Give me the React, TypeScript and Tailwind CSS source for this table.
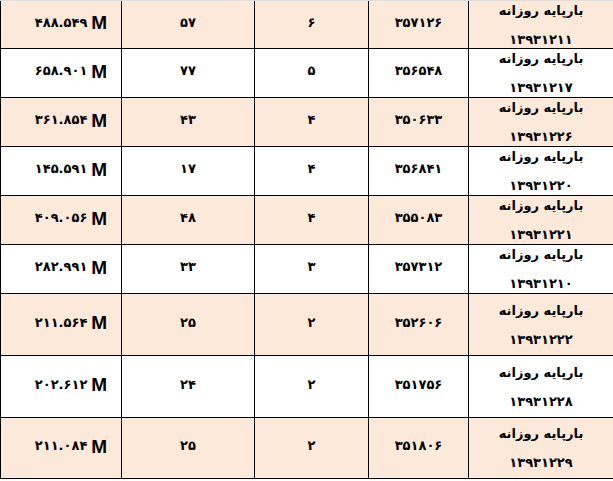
const rows = [
  { amount: '۴۸۸.۵۴۹', count: '۵۷', rank: '۶', code: '۳۵۷۱۲۶', date: '۱۳۹۳۱۲۱۱' },
  { amount: '۶۵۸.۹۰۱', count: '۷۷', rank: '۵', code: '۳۵۶۵۴۸', date: '۱۳۹۳۱۲۱۷' },
  { amount: '۳۶۱.۸۵۴', count: '۴۳', rank: '۴', code: '۳۵۰۶۳۳', date: '۱۳۹۳۱۲۲۶' },
  { amount: '۱۴۵.۵۹۱', count: '۱۷', rank: '۴', code: '۳۵۶۸۴۱', date: '۱۳۹۳۱۲۲۰' },
  { amount: '۴۰۹.۰۵۶', count: '۴۸', rank: '۴', code: '۳۵۵۰۸۳', date: '۱۳۹۳۱۲۲۱' },
  { amount: '۲۸۲.۹۹۱', count: '۳۳', rank: '۳', code: '۳۵۷۳۱۲', date: '۱۳۹۳۱۲۱۰' },
  { amount: '۲۱۱.۵۶۴', count: '۲۵', rank: '۲', code: '۳۵۲۶۰۶', date: '۱۳۹۳۱۲۲۲' },
  { amount: '۲۰۲.۶۱۲', count: '۲۴', rank: '۲', code: '۳۵۱۷۵۶', date: '۱۳۹۳۱۲۲۸' },
  { amount: '۲۱۱.۰۸۴', count: '۲۵', rank: '۲', code: '۳۵۱۸۰۶', date: '۱۳۹۳۱۲۲۹' },
];

// row heights include the bottom border
const heights = ['h-[48px]', 'h-[49px]', 'h-[49px]', 'h-[49px]', 'h-[49px]', 'h-[49px]', 'h-[62px]', 'h-[62px]', 'h-[61px]'];

const cell = 'flex items-center justify-center border-r border-black pb-[4px]';

export default function App() {
  return (
    <div className="w-[613px] h-[481px] overflow-hidden bg-white font-['DejaVu_Sans',sans-serif] font-bold text-[13px] text-black">
      <div className="h-px bg-[#dedede]" />
      <div className="border-l border-black">
        {rows.map((r, i) => (
          <div
            key={r.date}
            className={`grid grid-cols-[121px_133px_114px_100px_1fr] grid-rows-1 border-b border-black ${heights[i]} ${i % 2 === 0 ? 'bg-[#fde9d9]' : 'bg-white'}`}
          >
            <div className={`${cell} pl-[20px]`}>
              <span>{r.amount}</span>
              <span className="ml-[4px] font-['Liberation_Sans',sans-serif] text-[19px] leading-none">M</span>
            </div>
            <div className={cell}>{r.count}</div>
            <div className={cell}>{r.rank}</div>
            <div className={cell}>{r.code}</div>
            <div className="flex min-h-0 flex-col items-center justify-center leading-[29px]" dir="rtl">
              <span>بارپایه روزانه</span>
              <span>{r.date}</span>
            </div>
          </div>
        ))}
      </div>
    </div>
  );
}
